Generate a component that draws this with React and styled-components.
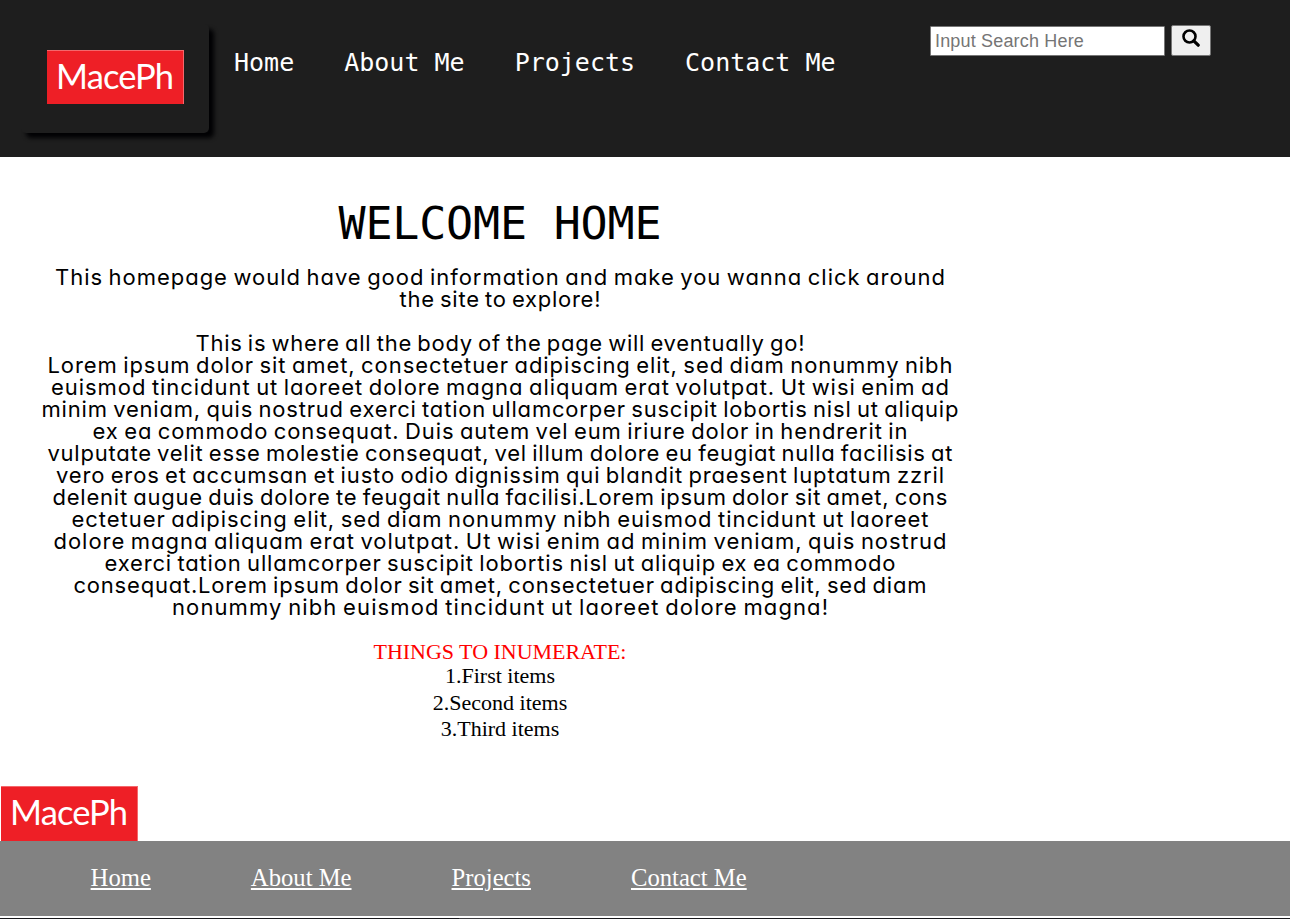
import React, { useLayoutEffect, useRef, useState } from "react";
import styled, { createGlobalStyle } from "styled-components";

const GlobalStyle = createGlobalStyle`
  * { box-sizing: border-box; }
  body { margin: 0; background: #fff; color: #000; overflow: hidden; }
`;

const Page = styled.div`
  display: flex;
  flex-direction: column;
  width: 1290px;
  height: 919px;
`;

const Header = styled.header`
  display: flex;
  align-items: flex-start;
  height: 157px;
  padding-top: 24px;
  padding-left: 21px;
  background: #1e1e1e;
`;

const LogoCard = styled.div`
  width: 188px;
  height: 109px;
  padding: 26px 0 0 26px;
  border-radius: 5px;
  box-shadow: 5px 5px 4px #020204;
`;

const LogoMark = styled.div`
  display: flex;
  justify-content: center;
  width: 137px;
  height: ${(p) => p.$height}px;
  border-top: 1px solid #f4686c;
  border-right: 1px solid #f4686c;
  background: #ee1f26;
  color: #fff;
  font: 400 34.5px/50px Lato, sans-serif;
`;

const Nav = styled.nav`
  display: flex;
  gap: 50px;
  margin: 20px 0 0 25px;
  width: 696px;
`;

const NavLink = styled.a`
  color: #fff;
  font: 25px/38px "DejaVu Sans Mono", monospace;
  white-space: nowrap;
`;

const Search = styled.form`
  display: flex;
  align-items: flex-end;
  gap: 6px;
  margin-top: 1px;
`;

const SearchInput = styled.input`
  width: 235px;
  height: 30px;
  padding: 1px 4px;
  border: 1px solid #767676;
  border-radius: 1px;
  background: #fff;
  font: 18px "Liberation Sans", sans-serif;
  letter-spacing: 0.17px;
  &::placeholder { color: #757575; }
`;

const SearchButton = styled.button`
  display: flex;
  justify-content: center;
  width: 40px;
  height: 31px;
  padding: 3px 0 0;
  border: 1px solid #767676;
  border-radius: 2px;
  background: #efefef;
  color: #000;
`;

const Main = styled.main`
  display: flex;
  flex-direction: column;
  align-items: center;
  width: 1000px;
  height: 629px;
  padding-top: 40px;
`;

const Title = styled.h1`
  margin: 0 0 15px;
  font: 400 45px/54px "DejaVu Sans Mono", monospace;
`;

const Copy = styled.div`
  display: flex;
  flex-direction: column;
  align-items: center;
  margin-bottom: 23px;
  font: 400 22px/22px Inter, sans-serif;
  font-feature-settings: "cv11" 1;
  word-spacing: -1.6px;
`;

const Line = styled.div`
  height: 22px;
  white-space: nowrap;
`;

const ListTitle = styled.div`
  color: #f00;
  font: 22px/22px "Liberation Serif", serif;
`;

const List = styled.div`
  display: flex;
  flex-direction: column;
  align-items: center;
  font: 22px/26.5px "Liberation Serif", serif;
`;

const FooterLogo = styled.div`
  padding-left: 1px;
`;

const Footer = styled.footer`
  display: flex;
  gap: 100px;
  height: 75px;
  padding: 22px 0 0 90.6px;
  background: #828282;
`;

const FooterLink = styled.a`
  color: #fff;
  font: 24.67px/29px "Liberation Serif", serif;
  text-decoration: underline;
  white-space: nowrap;
`;

const BottomEdge = styled.div`
  height: 1px;
  margin-top: 2px;
  padding-left: 459px;
  background: #17171b;
  &::before {
    content: "";
    display: block;
    width: 41px;
    height: 1px;
    background: #3c3c40;
  }
`;

const Span = styled.span`
  display: inline-block;
  white-space: nowrap;
`;

/* Tracks its text so that it spans the given width. */
function Fitted({ width, children }) {
  const ref = useRef(null);
  const [spacing, setSpacing] = useState(0);
  useLayoutEffect(() => {
    const natural = ref.current.getBoundingClientRect().width;
    setSpacing((width - natural) / (children.length - 1));
  }, [width, children]);
  return (
    <Span ref={ref} style={{ letterSpacing: spacing, marginRight: -spacing }}>
      {children}
    </Span>
  );
}

const paragraph = [
  ["This homepage would have good information and make you wanna click around", 890],
  ["the site to explore!", 201],
  null,
  ["This is where all the body of the page will eventually go!", 609],
  ["Lorem ipsum dolor sit amet, consectetuer adipiscing elit, sed diam nonummy nibh", 905],
  ["euismod tincidunt ut laoreet dolore magna aliquam erat volutpat. Ut wisi enim ad", 898],
  ["minim veniam, quis nostrud exerci tation ullamcorper suscipit lobortis nisl ut aliquip", 917],
  ["ex ea commodo consequat. Duis autem vel eum iriure dolor in hendrerit in", 815],
  ["vulputate velit esse molestie consequat, vel illum dolore eu feugiat nulla facilisis at", 905],
  ["vero eros et accumsan et iusto odio dignissim qui blandit praesent luptatum zzril", 888],
  ["delenit augue duis dolore te feugait nulla facilisi.Lorem ipsum dolor sit amet, cons", 895],
  ["ectetuer adipiscing elit, sed diam nonummy nibh euismod tincidunt ut laoreet", 857],
  ["dolore magna aliquam erat volutpat. Ut wisi enim ad minim veniam, quis nostrud", 893],
  ["exerci tation ullamcorper suscipit lobortis nisl ut aliquip ex ea commodo", 791],
  ["consequat.Lorem ipsum dolor sit amet, consectetuer adipiscing elit, sed diam", 853],
  ["nonummy nibh euismod tincidunt ut laoreet dolore magna!", 656],
];

const links = ["Home", "About Me", "Projects", "Contact Me"];
const items = ["1.First items", "2.Second items", "3.Third items"];

function Logo({ height }) {
  return (
    <LogoMark $height={height}>
      <Fitted width={118}>MacePh</Fitted>
    </LogoMark>
  );
}

export default function App() {
  return (
    <Page>
      <GlobalStyle />
      <Header>
        <LogoCard>
          <Logo height={54} />
        </LogoCard>
        <Nav>
          {links.map((l) => (
            <NavLink key={l}>{l}</NavLink>
          ))}
        </Nav>
        <Search>
          <SearchInput placeholder="Input Search Here" />
          <SearchButton type="button" aria-label="Search">
            <svg width="18" height="18" viewBox="0 0 18 18" fill="none" stroke="currentColor">
              <circle cx="7.5" cy="7.5" r="6" strokeWidth="2.6" />
              <path d="M11.8 11.8L16.2 16.2" strokeWidth="3.2" strokeLinecap="round" />
            </svg>
          </SearchButton>
        </Search>
      </Header>
      <Main>
        <Title>
          <Fitted width={323}>WELCOME HOME</Fitted>
        </Title>
        <Copy>
          {paragraph.map((row, i) => (
            <Line key={i}>{row && <Fitted width={row[1]}>{row[0]}</Fitted>}</Line>
          ))}
        </Copy>
        <ListTitle>
          <Fitted width={253}>THINGS TO INUMERATE:</Fitted>
        </ListTitle>
        <List>
          {items.map((t) => (
            <div key={t}>{t}</div>
          ))}
        </List>
      </Main>
      <FooterLogo>
        <Logo height={55} />
      </FooterLogo>
      <Footer>
        {links.map((l) => (
          <FooterLink key={l}>{l}</FooterLink>
        ))}
      </Footer>
      <BottomEdge />
    </Page>
  );
}
